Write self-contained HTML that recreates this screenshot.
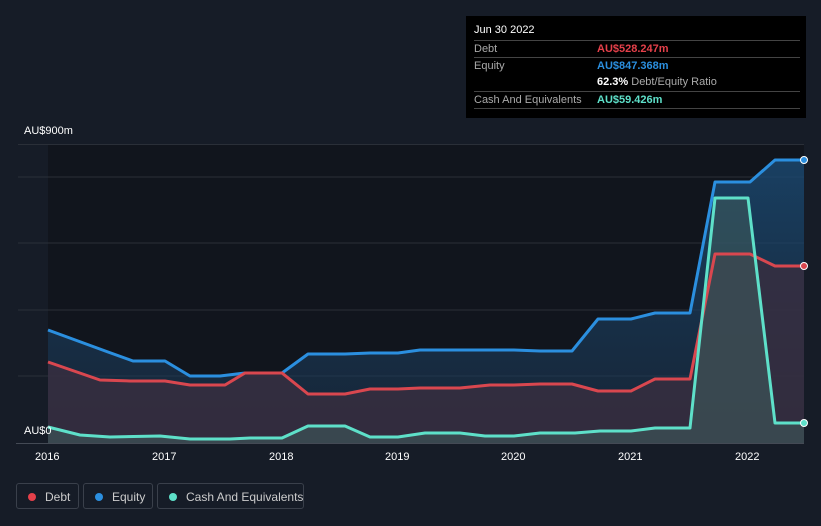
<!DOCTYPE html><html><head><style>
body{margin:0;width:821px;height:526px;background:#161c27;font-family:"Liberation Sans",sans-serif;overflow:hidden;position:relative}
.tt{position:absolute;left:466px;top:16px;width:340px;height:102px;background:#000;color:#fff;font-size:11px}
.tt .r{position:absolute;left:8px;width:326px;border-top:1px solid #444;height:17px;line-height:17px}
.tt .l{color:#aaa;position:absolute;left:0}
.tt .v{position:absolute;left:123px;font-weight:bold;white-space:nowrap}
.lg{position:absolute;top:483px;height:26px;border:1px solid #3a404b;border-radius:3px;color:#ccc;font-size:12px;line-height:26px;box-sizing:border-box;white-space:nowrap}
.lg i{position:absolute;left:11px;top:9px;width:8px;height:8px;border-radius:50%}
.lg span{position:absolute;left:28px}
.ax{position:absolute;color:#fff;font-size:11px}
</style></head><body>
<svg width="821" height="526" style="position:absolute;left:0;top:0">
<defs>
<linearGradient id="ge" x1="0" y1="0" x2="0" y2="1"><stop offset="0" stop-color="#1b4a73" stop-opacity=".8"/><stop offset="1" stop-color="#1b3550" stop-opacity=".5"/></linearGradient>
</defs>
<rect x="48" y="144" width="756" height="299" fill="#11151d"/>
<g stroke="#2a2f38" stroke-width="1"><line x1="18" y1="144.5" x2="804" y2="144.5"/><line x1="18" y1="177" x2="804" y2="177"/><line x1="18" y1="243" x2="804" y2="243"/><line x1="18" y1="310" x2="804" y2="310"/><line x1="18" y1="376" x2="804" y2="376"/></g>
<polygon fill="url(#ge)" points="48,443 48,330 108,352 133,361 165,361 190,376 220,376 245,373 282,373 308,354 345,354 370,353 398,353 420,350 514,350 540,351 572,351 598,319 631,319 655,313 690,313 715,182 750,182 775,160 804,160 804,443"/>
<polygon fill="#3a2e40" fill-opacity=".8" points="48,443 48,362 100,380 130,381 165,381 190,385 225,385 245,373 282,373 308,394 345,394 370,389 398,389 420,388 460,388 490,385 514,385 540,384 572,384 598,391 631,391 655,379 690,379 715,254 750,254 775,266 804,266 804,443"/>
<polygon fill="#3d5a5c" fill-opacity=".6" points="48,443 48,427 80,435 110,437 160,436 190,439 230,439 250,438 282,438 308,426 345,426 370,437 398,437 425,433 460,433 485,436 514,436 540,433 575,433 600,431 631,431 655,428 690,428 715,198 748,198 775,423 804,423 804,443"/>
<g fill="none" stroke-width="3" stroke-linejoin="round">
<polyline stroke="#2b8fdf" points="48,330 108,352 133,361 165,361 190,376 220,376 245,373 282,373 308,354 345,354 370,353 398,353 420,350 514,350 540,351 572,351 598,319 631,319 655,313 690,313 715,182 750,182 775,160 804,160"/>
<polyline stroke="#d9474f" points="48,362 100,380 130,381 165,381 190,385 225,385 245,373 282,373 308,394 345,394 370,389 398,389 420,388 460,388 490,385 514,385 540,384 572,384 598,391 631,391 655,379 690,379 715,254 750,254 775,266 804,266"/>
<polyline stroke="#5ee0c9" points="48,427 80,435 110,437 160,436 190,439 230,439 250,438 282,438 308,426 345,426 370,437 398,437 425,433 460,433 485,436 514,436 540,433 575,433 600,431 631,431 655,428 690,428 715,198 748,198 775,423 804,423"/>
</g>
<circle cx="804" cy="160" r="3.5" fill="#2b8fdf" stroke="#fff" stroke-width="1"/>
<circle cx="804" cy="266" r="3.5" fill="#d9474f" stroke="#fff" stroke-width="1"/>
<circle cx="804" cy="423" r="3.5" fill="#5ee0c9" stroke="#fff" stroke-width="1"/>
<line x1="16" y1="443.5" x2="804" y2="443.5" stroke="#444a55"/>
</svg>
<div class="ax" style="left:24px;top:125px">AU$900m</div>
<div class="ax" style="left:24px;top:425px">AU$0</div>
<div class="ax" style="left:35px;top:451px">2016</div><div class="ax" style="left:152px;top:451px">2017</div><div class="ax" style="left:269px;top:451px">2018</div><div class="ax" style="left:385px;top:451px">2019</div><div class="ax" style="left:501px;top:451px">2020</div><div class="ax" style="left:618px;top:451px">2021</div><div class="ax" style="left:735px;top:451px">2022</div>
<div class="tt">
<div style="position:absolute;left:8px;top:8px">Jun 30 2022</div>
<div class="r" style="top:24px"><span class="l">Debt</span><span class="v" style="color:#e5404a">AU$528.247m</span></div>
<div class="r" style="top:41px"><span class="l">Equity</span><span class="v" style="color:#2b8fdf">AU$847.368m</span></div>
<div class="r" style="top:58px;border-top:none"><span class="v">62.3% <b style="color:#aaa;font-weight:normal">Debt/Equity Ratio</b></span></div>
<div class="r" style="top:75px"><span class="l">Cash And Equivalents</span><span class="v" style="color:#5ee0c9">AU$59.426m</span></div>
<div class="r" style="top:92px;height:1px"></div>
</div>
<div class="lg" style="left:16px;width:63px"><i style="background:#e5404a"></i><span>Debt</span></div>
<div class="lg" style="left:83px;width:70px"><i style="background:#2b8fdf"></i><span>Equity</span></div>
<div class="lg" style="left:157px;width:147px"><i style="background:#5ee0c9"></i><span>Cash And Equivalents</span></div>
</body></html>
